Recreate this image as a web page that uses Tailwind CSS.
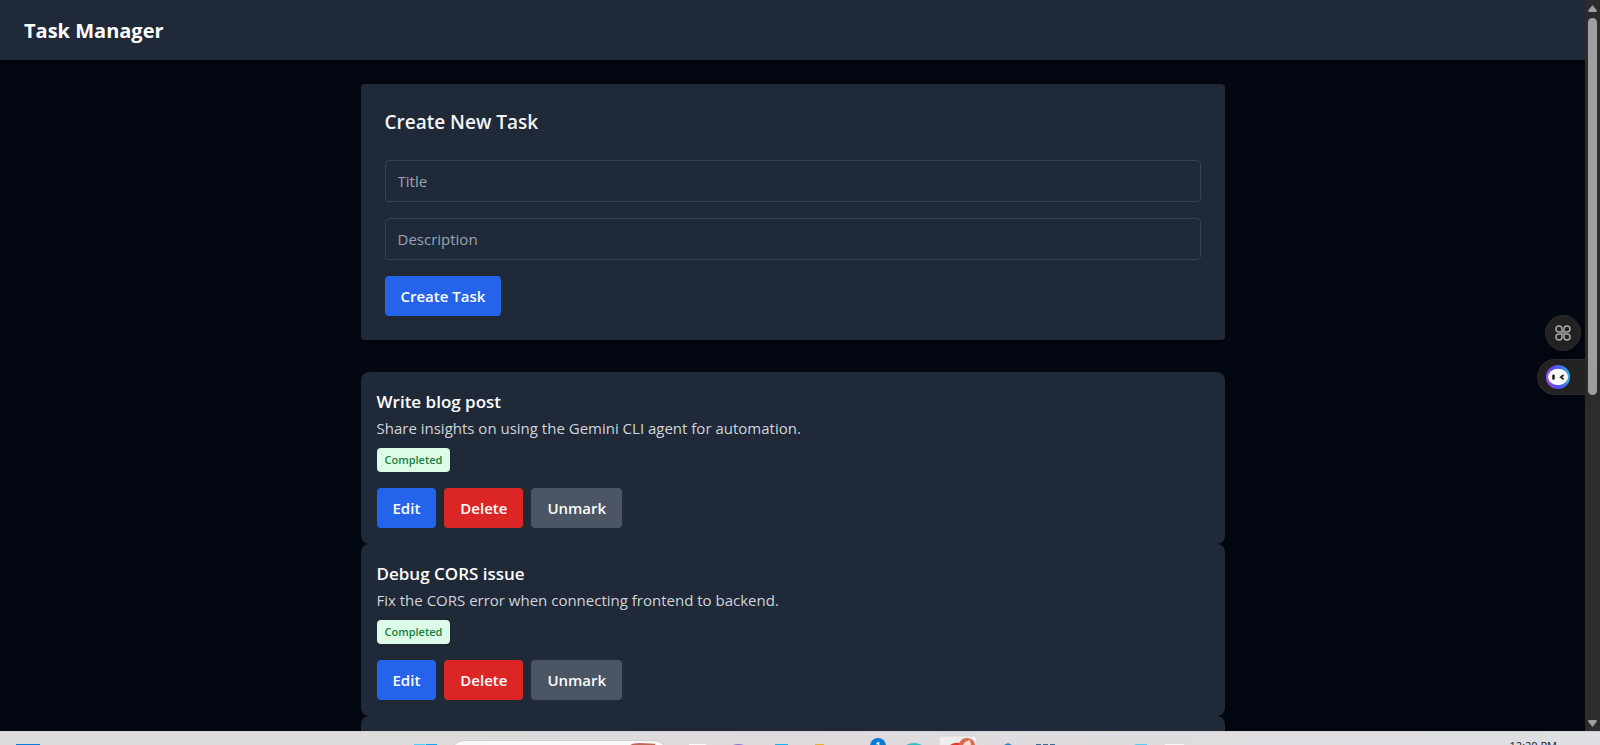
<!DOCTYPE html>
<html lang="en">
<head>
<meta charset="utf-8">
<title>Task Manager</title>
<script src="https://cdn.jsdelivr.net/npm/@tailwindcss/browser@4"></script>
</head>
<body class="flex h-screen flex-col overflow-hidden bg-[#030712] font-['Open_Sans','Noto_Sans',sans-serif] text-[15px] leading-6 text-gray-100">

<div class="relative flex min-h-0 flex-1">
  <div class="min-w-0 flex-1 overflow-hidden">
    <header class="bg-[#1f2937] px-6 pt-[17px] pb-[15px] shadow-sm">
      <h1 class="text-xl leading-7 font-bold text-white">Task Manager</h1>
    </header>

    <main class="mx-auto max-w-4xl px-4 py-6">
      <form class="mb-8 rounded bg-[#1f2937] p-6 shadow-sm">
        <h2 class="mb-6 text-[19px] leading-7 font-semibold">Create New Task</h2>
        <input type="text" aria-label="Title" placeholder="Title" class="mb-4 block h-[42px] w-full rounded border border-[#374151] bg-transparent px-3 placeholder:text-[#9ca3af]">
        <input type="text" aria-label="Description" placeholder="Description" class="mb-4 block h-[42px] w-full rounded border border-[#374151] bg-transparent px-3 placeholder:text-[#9ca3af]">
        <button type="button" class="block rounded bg-[#2563eb] px-4 py-2 font-semibold text-white">Create Task</button>
      </form>

      <ul>
        <li class="rounded-lg bg-[#1f2937] p-4 shadow-md">
          <h3 class="text-[17px] leading-7 font-semibold text-white">Write blog post</h3>
          <p class="text-[#d1d5db]">Share insights on using the Gemini CLI agent for automation.</p>
          <span class="mt-2 block w-fit rounded bg-[#dcfce7] px-2 py-1 text-[11px] leading-4 font-semibold text-[#15803d]">Completed</span>
          <div class="mt-4 flex gap-2 font-semibold text-white">
            <button type="button" class="rounded bg-[#2563eb] px-4 py-2">Edit</button>
            <button type="button" class="rounded bg-[#dc2626] px-4 py-2">Delete</button>
            <button type="button" class="rounded bg-[#4b5563] px-4 py-2">Unmark</button>
          </div>
        </li>
        <li class="rounded-lg bg-[#1f2937] p-4 shadow-md">
          <h3 class="text-[17px] leading-7 font-semibold text-white">Debug CORS issue</h3>
          <p class="text-[#d1d5db]">Fix the CORS error when connecting frontend to backend.</p>
          <span class="mt-2 block w-fit rounded bg-[#dcfce7] px-2 py-1 text-[11px] leading-4 font-semibold text-[#15803d]">Completed</span>
          <div class="mt-4 flex gap-2 font-semibold text-white">
            <button type="button" class="rounded bg-[#2563eb] px-4 py-2">Edit</button>
            <button type="button" class="rounded bg-[#dc2626] px-4 py-2">Delete</button>
            <button type="button" class="rounded bg-[#4b5563] px-4 py-2">Unmark</button>
          </div>
        </li>
        <li class="h-10 rounded-lg bg-[#1f2937] p-4 shadow-md"></li>
      </ul>
    </main>
  </div>

  <!-- Scrollbar -->
  <div class="flex w-[15px] flex-col items-center bg-[#2c2c2c] pt-[5px] pb-1" aria-hidden="true">
    <svg class="h-[7px] w-[9px]" viewBox="0 0 9 7"><path d="M4.5 0 8.8 5.6Q9 7 8 7H1Q0 7 .2 5.6Z" fill="#9f9f9f"/></svg>
    <div class="mt-[6px] h-[377px] w-[9px] rounded-full bg-[#9f9f9f]"></div>
    <svg class="mt-auto h-[7px] w-[9px]" viewBox="0 0 9 7"><path d="M4.5 7 .2 1.4Q0 0 1 0H8Q9 0 8.8 1.4Z" fill="#9f9f9f"/></svg>
  </div>

  <!-- Floating extension buttons -->
  <div class="absolute top-[315px] right-[15px] flex flex-col items-end gap-2">
    <button type="button" aria-label="Apps" class="mr-1 flex size-9 items-center justify-center rounded-full border border-[#2b2b2b] bg-[#222222] shadow-lg">
      <svg class="size-4" viewBox="0 0 16 16" fill="none" stroke="#a9a9a9" stroke-width="1.5">
        <path d="M7 7H4A3 3 0 1 1 7 4Z"/><path d="M9 7V4A3 3 0 1 1 12 7Z"/><path d="M7 9V12A3 3 0 1 1 4 9Z"/><path d="M9 9H12A3 3 0 1 1 9 12Z"/>
      </svg>
    </button>
    <button type="button" aria-label="Assistant" class="flex h-9 w-12 items-center rounded-l-full border border-r-0 border-[#2b2b2b] bg-[#222222] pl-2 shadow-lg">
      <svg class="size-6" viewBox="0 0 24 24">
        <defs><linearGradient id="ring" x1="0" y1=".7" x2="1" y2=".5"><stop offset="0" stop-color="#b44cf0"/><stop offset=".35" stop-color="#5b46f5"/><stop offset=".7" stop-color="#4668f5"/><stop offset="1" stop-color="#29b4e8"/></linearGradient></defs>
        <circle cx="12" cy="12" r="12" fill="url(#ring)"/>
        <ellipse cx="12" cy="12" rx="10" ry="8.3" fill="#fff"/>
        <rect x="6.2" y="9.6" width="2.6" height="5.2" rx="1.1" fill="#222"/>
        <path d="M17.6 10 14.8 12.2 17.6 14.4" fill="none" stroke="#222" stroke-width="1.8"/>
      </svg>
    </button>
  </div>
</div>

<!-- Desktop taskbar, showing only its upper edge -->
<footer class="relative h-[14px] shrink-0 overflow-hidden border-t border-[#d3d1d2] bg-linear-to-r from-[#dcdcdb] via-[#e0dadc] to-[#dddfe3]">
  <div class="flex items-start justify-center pl-[3px]">
    <button type="button" aria-label="Start" class="mr-[2px]"><svg class="h-[13px] w-11" viewBox="0 0 44 13"><path d="M11 12H22V13H11Z" fill="#4ecdfa"/><path d="M23 12H34V13H23Z" fill="#1ba1f0"/></svg></button>
    <input type="search" aria-label="Search" class="mt-2 h-8 w-[180px] rounded-l-full border border-r-0 border-[#cfcfcf] bg-[#fafafa]">
    <svg class="mt-2 mr-[3px] h-8 w-10 rounded-r-full border border-l-0 border-[#cfcfcf] bg-[#fafafa]" viewBox="0 0 40 32"><path d="M0 5Q2 2 10 2L27 3 28 6Z" fill="#bd6a54"/></svg>
    <button type="button" aria-label="Task view"><svg class="h-[13px] w-11" viewBox="0 0 44 13"><path d="M17 12H34V13H17Z" fill="#fafafa"/></svg></button>
    <button type="button" aria-label="Chat"><svg class="h-[13px] w-11" viewBox="0 0 44 13"><path d="M17 13Q22 11 28 13Z" fill="#8579cf"/></svg></button>
    <button type="button" aria-label="Store"><svg class="h-[13px] w-11" viewBox="0 0 44 13"><path d="M15 12H28V13H15Z" fill="#12b5f6"/></svg></button>
    <button type="button" aria-label="Files"><svg class="h-[13px] w-11" viewBox="0 0 44 13"><path d="M11 12H20V13H11Z" fill="#e6b02d"/></svg></button>
    <button type="button" aria-label="Mail, 1 new" class="flex h-[13px] w-11 justify-end pt-[6px] pr-[6px]"><span class="flex size-4 shrink-0 items-center justify-center rounded-full bg-[#0a7bd8] text-[10px] leading-4 font-semibold text-white">1</span></button>
    <button type="button" aria-label="Edge"><svg class="h-[13px] w-11" viewBox="0 0 44 13"><path d="M14 13Q22 9 30 13Z" fill="#2fc0c4"/></svg></button>
    <button type="button" aria-label="Chrome"><svg class="h-[13px] w-11" viewBox="0 0 44 13"><rect x="3" y="4" width="38" height="20" rx="3" fill="#ededee" stroke="#d8d6d8"/><path d="M14 13Q18 10 24 11V13Z" fill="#e23b33"/><path d="M23 13A8 7 0 0 1 39 13Z" fill="#d9694f"/><path d="M27 13 29 10 34 8 35 13Z" fill="#f5dccb"/></svg></button>
    <button type="button" aria-label="Code"><svg class="h-[13px] w-11" viewBox="0 0 44 13"><path d="M24 13 28 11 32 13Z" fill="#2487c7"/></svg></button>
    <button type="button" aria-label="Database"><svg class="h-[13px] w-11" viewBox="0 0 44 13"><path d="M12 12H17V13H12ZM19 12H24V13H19ZM26 12H31V13H26Z" fill="#42698f"/></svg></button>
    <span class="w-11"></span>
    <button type="button" aria-label="Terminal"><svg class="h-[13px] w-11" viewBox="0 0 44 13"><path d="M22 13 24 12H35V13Z" fill="#59cdf2"/></svg></button>
    <button type="button" aria-label="Notes"><svg class="h-[13px] w-11" viewBox="0 0 44 13"><path d="M9 12H28V13H9Z" fill="#f6f6f7"/></svg></button>
  </div>
  <button type="button" aria-label="Widgets" class="absolute top-3 left-4 h-6 w-6 bg-[#0a7bd8]"></button>
  <time class="absolute top-[6px] right-[43px] text-[11px] leading-4 text-[#1b1b1b]">12:20 PM</time>
</footer>
</body>
</html>
